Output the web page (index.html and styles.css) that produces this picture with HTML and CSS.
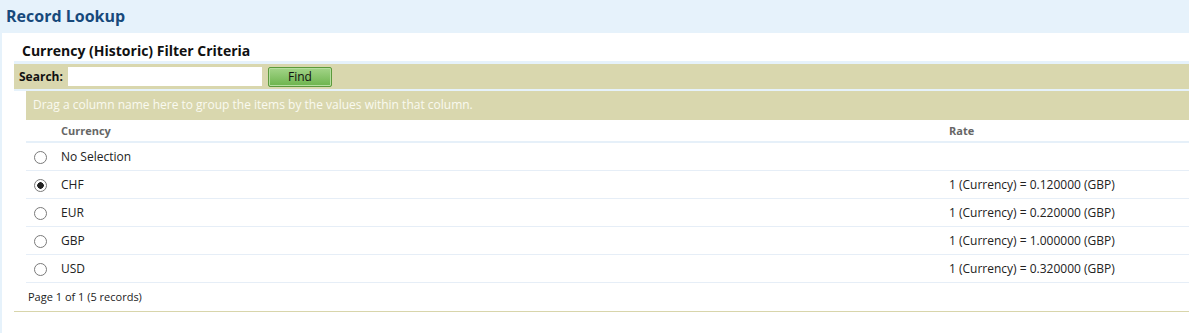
FILE: index.html
```html
<!DOCTYPE html>
<html lang="en">
<head>
    <meta charset="UTF-8">
    <meta name="viewport" content="width=device-width, initial-scale=1.0">
    <title>Record Lookup</title>
    <link rel="stylesheet" href="styles.css">
</head>
<body>
    <!-- Page title -->
    <header class="page-title">Record Lookup</header>

    <main class="panel">
        <div class="lookup">
            <h2>Currency (Historic) Filter Criteria</h2>

            <form class="search-bar" onsubmit="return false;">
                <label for="search">Search:</label>
                <input type="text" id="search" name="search">
                <button type="submit">Find</button>
            </form>

            <div class="grid">
                <div class="group-panel">Drag a column name here to group the items by the values within that column.</div>

                <table>
                    <thead>
                        <tr>
                            <th class="sel"></th>
                            <th class="cur">Currency</th>
                            <th>Rate</th>
                        </tr>
                    </thead>
                    <tbody>
                        <tr>
                            <td class="sel"><input type="radio" name="currency"></td>
                            <td>No Selection</td>
                            <td></td>
                        </tr>
                        <tr>
                            <td class="sel"><input type="radio" name="currency" checked></td>
                            <td>CHF</td>
                            <td>1 (Currency) = 0.120000 (GBP)</td>
                        </tr>
                        <tr>
                            <td class="sel"><input type="radio" name="currency"></td>
                            <td>EUR</td>
                            <td>1 (Currency) = 0.220000 (GBP)</td>
                        </tr>
                        <tr>
                            <td class="sel"><input type="radio" name="currency"></td>
                            <td>GBP</td>
                            <td>1 (Currency) = 1.000000 (GBP)</td>
                        </tr>
                        <tr>
                            <td class="sel"><input type="radio" name="currency"></td>
                            <td>USD</td>
                            <td>1 (Currency) = 0.320000 (GBP)</td>
                        </tr>
                    </tbody>
                </table>

                <div class="pager">Page 1 of 1 (5 records)</div>
            </div>
        </div>
    </main>
</body>
</html>
```

FILE: styles.css
```css
 * {
   margin: 0;
   padding: 0;
   box-sizing: border-box;
 }
 body {
     font-family: 'Open Sans', 'Liberation Sans', sans-serif;
     background-color: #e6f2fb;
     color: #222;
 }

 /* Title bar */
 .page-title {
     height: 33px;
     padding-left: 6px;
     line-height: 33px;
     font-size: 16px;
     font-weight: bold;
     color: #17497b;
 }

 .panel {
     margin-left: 2px;
     background-color: white;
     min-height: 300px;
 }
 .lookup {
     padding-left: 12px;
 }
 .lookup h2 {
     height: 28px;
     padding-left: 8px;
     padding-top: 8px;
     font-size: 14px;
     line-height: 19px;
     color: #111;
 }

 /* Search bar */
 .search-bar {
     display: flex;
     align-items: center;
     height: 30px;
     border-top: 3px solid #e6f2fb;
     border-bottom: 2px solid #e6f2fb;
     background-color: #d9d7ae;
     padding-left: 5px;
 }
 .search-bar label {
     font-size: 12px;
     font-weight: bold;
     color: #111;
     width: 49px;
 }
 .search-bar input {
     width: 194px;
     height: 19px;
     border: none;
     background: white;
     font-family: inherit;
     font-size: 12px;
     padding: 0 3px;
 }
 .search-bar button {
     margin-left: 6px;
     width: 64px;
     height: 20px;
     border: 1px solid #5b9a3c;
     border-radius: 2px;
     box-shadow: inset 0 0 0 1px #b6dea0;
     background: linear-gradient(#a3d488, #6db44d);
     font-family: inherit;
     font-size: 12px;
     color: #111;
     cursor: pointer;
 }

 /* Grid */
 .grid {
     margin-left: 12px;
 }
 .group-panel {
     height: 29px;
     line-height: 27px;
     padding-left: 7px;
     background-color: #d9d7ae;
     color: #fafaf0;
     font-size: 12px;
 }
 table {
     width: 100%;
     border-collapse: collapse;
     font-size: 12px;
 }
 th {
     height: 22px;
     text-align: left;
     font-size: 11px;
     font-weight: bold;
     color: #666;
     border-bottom: 2px solid #e6f0f9;
     padding: 0 0 0 5px;
 }
 td {
     height: 28px;
     border-bottom: 1px solid #e6eef7;
     padding: 0 0 0 5px;
     color: #222;
 }
 .sel {
     width: 30px;
     padding: 0 0 0 8px;
 }
 .cur {
     width: 888px;
 }
 input[type="radio"] {
     appearance: none;
     display: block;
     width: 13px;
     height: 13px;
     border: 1px solid #7a7a7a;
     border-radius: 50%;
     background: white;
     margin-top: 2px;
 }
 input[type="radio"]:checked {
     background: radial-gradient(circle, #222 0 3px, white 3.5px);
 }

 .pager {
     height: 28px;
     line-height: 28px;
     padding-left: 2px;
     font-size: 11px;
     color: #222;
 }
 .lookup::after {
     content: "";
     display: block;
     border-bottom: 1px solid #d8d5ab;
 }
```
